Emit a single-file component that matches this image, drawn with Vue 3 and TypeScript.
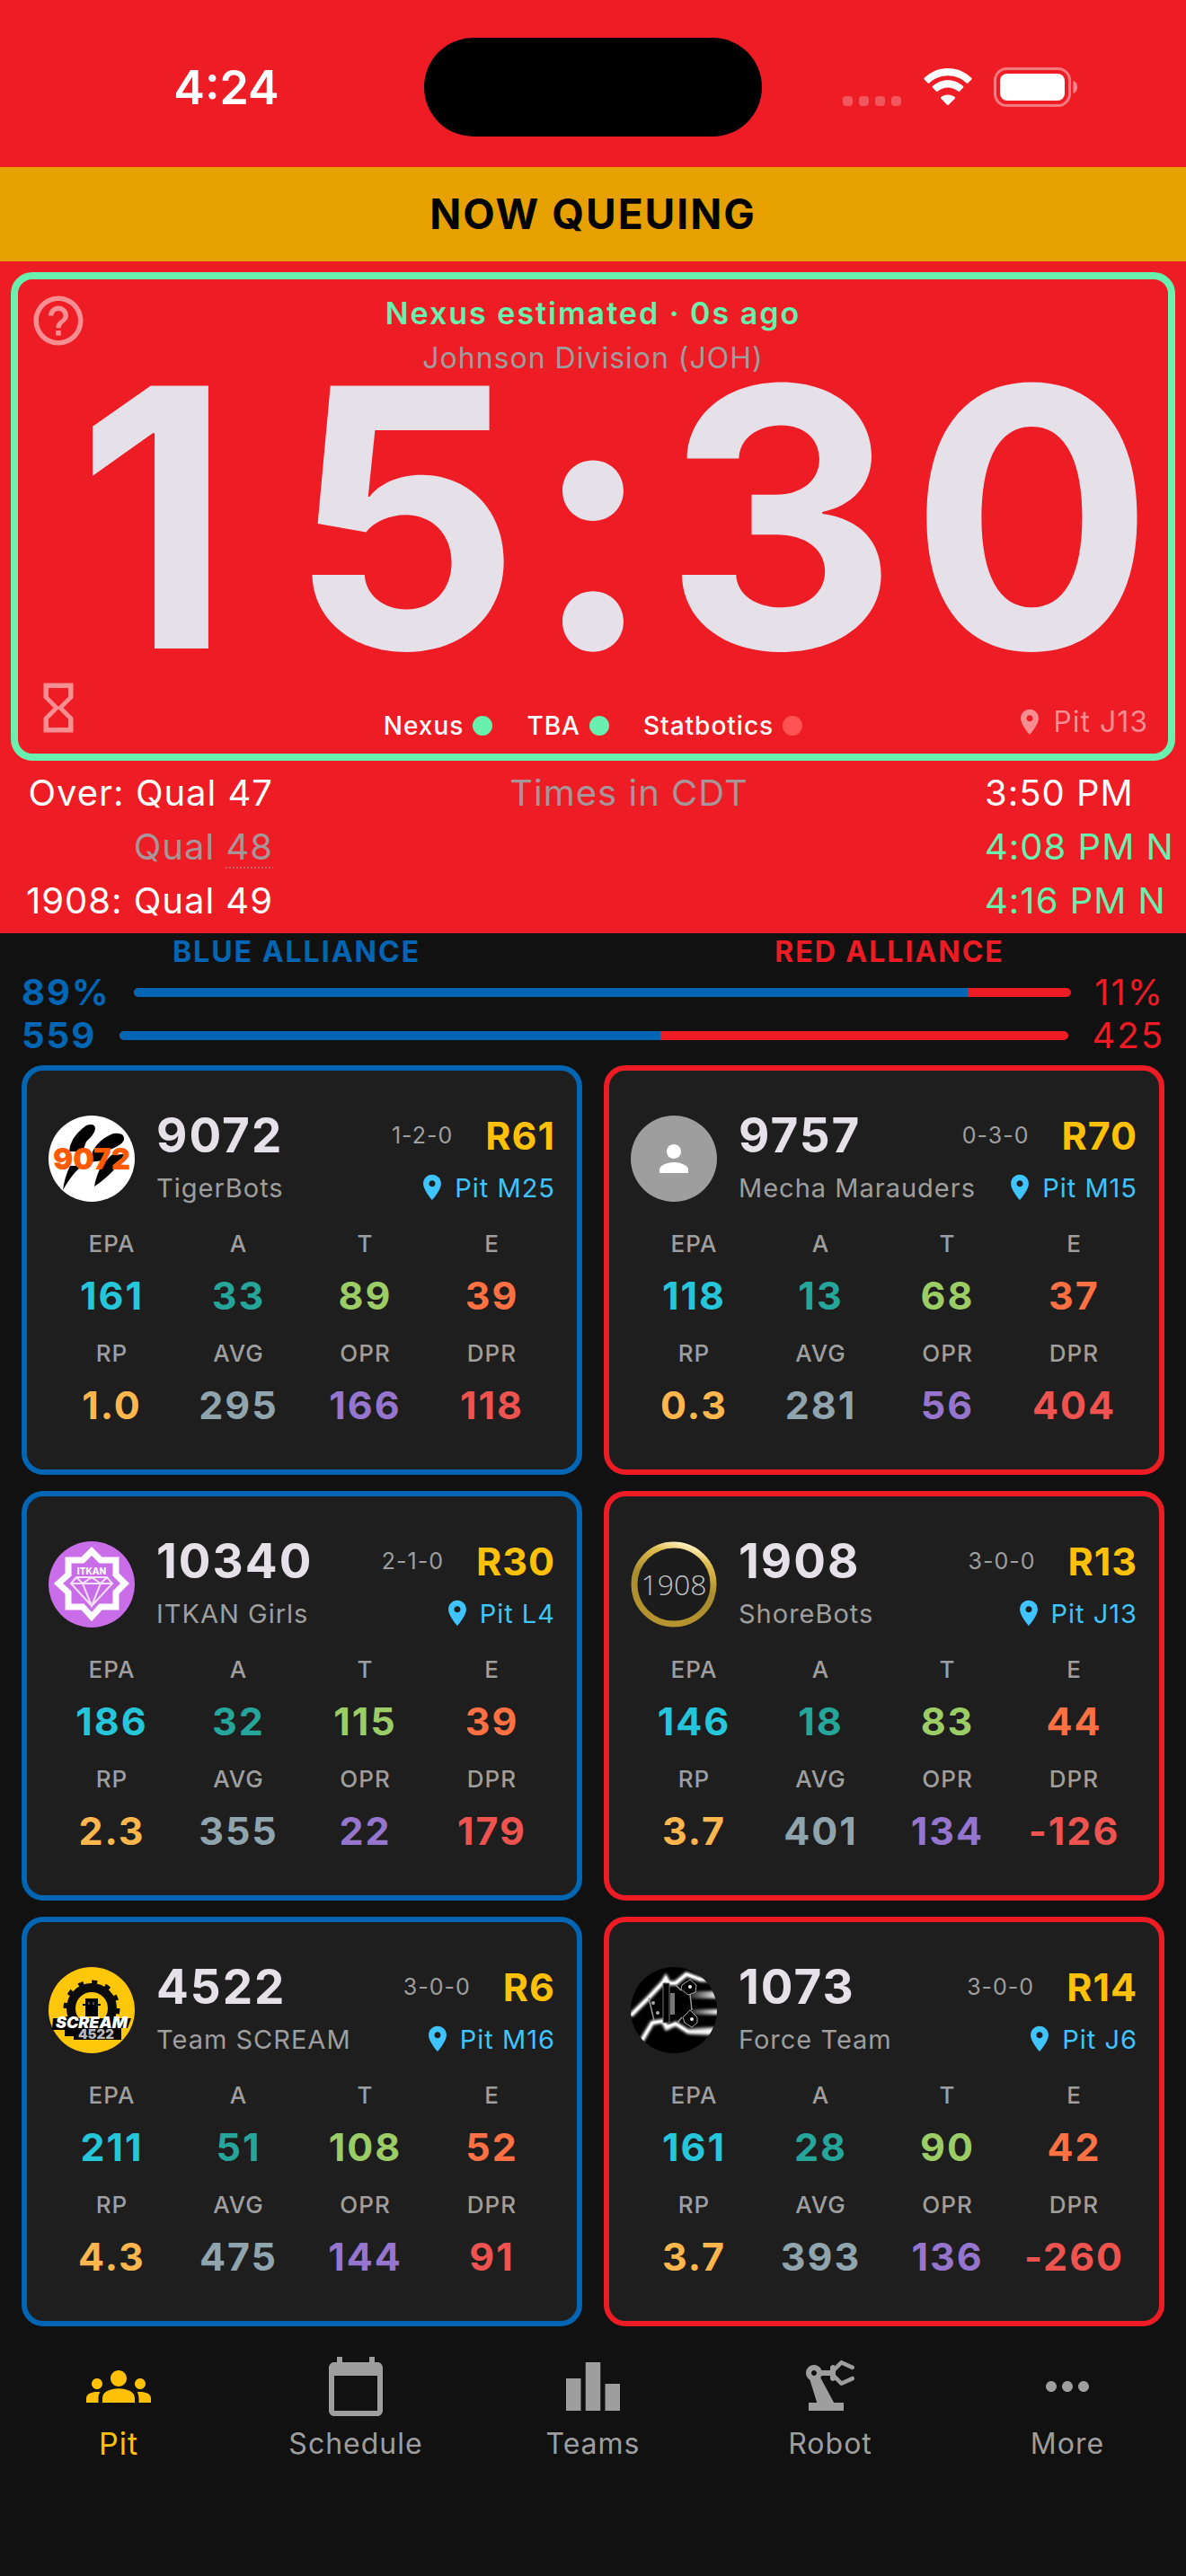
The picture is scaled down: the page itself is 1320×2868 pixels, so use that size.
<script setup lang="ts">
interface Team {
  number: string
  name: string
  record: string
  rank: string
  pit: string
  logo: 'tiger' | 'person' | 'itkan' | 'shore' | 'scream' | 'force'
  alliance: 'blue' | 'red'
  values: string[]
}

const metrics = [
  { label: 'EPA', tone: 'cyan' },
  { label: 'A', tone: 'teal' },
  { label: 'T', tone: 'green' },
  { label: 'E', tone: 'orange' },
  { label: 'RP', tone: 'amber' },
  { label: 'AVG', tone: 'slate' },
  { label: 'OPR', tone: 'purple' },
  { label: 'DPR', tone: 'rose' },
]

const teams: Team[] = [
  { number: '9072', name: 'TigerBots', record: '1-2-0', rank: 'R61', pit: 'Pit M25', logo: 'tiger', alliance: 'blue', values: ['161', '33', '89', '39', '1.0', '295', '166', '118'] },
  { number: '9757', name: 'Mecha Marauders', record: '0-3-0', rank: 'R70', pit: 'Pit M15', logo: 'person', alliance: 'red', values: ['118', '13', '68', '37', '0.3', '281', '56', '404'] },
  { number: '10340', name: 'ITKAN Girls', record: '2-1-0', rank: 'R30', pit: 'Pit L4', logo: 'itkan', alliance: 'blue', values: ['186', '32', '115', '39', '2.3', '355', '22', '179'] },
  { number: '1908', name: 'ShoreBots', record: '3-0-0', rank: 'R13', pit: 'Pit J13', logo: 'shore', alliance: 'red', values: ['146', '18', '83', '44', '3.7', '401', '134', '-126'] },
  { number: '4522', name: 'Team SCREAM', record: '3-0-0', rank: 'R6', pit: 'Pit M16', logo: 'scream', alliance: 'blue', values: ['211', '51', '108', '52', '4.3', '475', '144', '91'] },
  { number: '1073', name: 'Force Team', record: '3-0-0', rank: 'R14', pit: 'Pit J6', logo: 'force', alliance: 'red', values: ['161', '28', '90', '42', '3.7', '393', '136', '-260'] },
]

const sources = [
  { name: 'Nexus', up: true },
  { name: 'TBA', up: true },
  { name: 'Statbotics', up: false },
]

const forecasts = [
  { blue: '89%', red: '11%', share: 89 },
  { blue: '559', red: '425', share: 57 },
]

const countdown = '15:30'

const pinPath =
  'M12 2C8.13 2 5 5.13 5 9c0 5.25 7 13 7 13s7-7.75 7-13c0-3.87-3.13-7-7-7zm0 9.5c-1.38 0-2.5-1.12-2.5-2.5s1.12-2.5 2.5-2.5 2.5 1.12 2.5 2.5-1.12 2.5-2.5 2.5z'

const tabs = [
  { label: 'Pit', active: true, path: 'M12 12.75c1.63 0 3.07.39 4.24.9 1.08.48 1.76 1.56 1.76 2.73V18H6v-1.61c0-1.18.68-2.26 1.76-2.73 1.17-.52 2.61-.91 4.24-.91zM4 13c1.1 0 2-.9 2-2s-.9-2-2-2-2 .9-2 2 .9 2 2 2zm1.13 1.1c-.37-.06-.74-.1-1.13-.1-.99 0-1.93.21-2.78.58C.48 14.9 0 15.62 0 16.43V18h4.5v-1.61c0-.83.23-1.61.63-2.29zM20 13c1.1 0 2-.9 2-2s-.9-2-2-2-2 .9-2 2 .9 2 2 2zm4 3.43c0-.81-.48-1.53-1.22-1.85-.85-.37-1.79-.58-2.78-.58-.39 0-.76.04-1.13.1.4.68.63 1.46.63 2.29V18H24v-1.57zM12 6c1.66 0 3 1.34 3 3s-1.34 3-3 3-3-1.34-3-3 1.34-3 3-3z' },
  { label: 'Schedule', active: false, path: 'M20 3h-1V1h-2v2H7V1H5v2H4c-1.1 0-2 .9-2 2v16c0 1.1.9 2 2 2h16c1.1 0 2-.9 2-2V5c0-1.1-.9-2-2-2zm0 18H4V8h16v13z' },
  { label: 'Teams', active: false, path: 'M7.5 21H2V9h5.5v12zm7.25-18h-5.5v18h5.5V3zM22 11h-5.5v10H22V11z' },
  { label: 'Robot', active: false, path: 'M19.93 8.35l-3.6 1.68L14 7.7V6.3l2.33-2.33 3.6 1.68c.38.18.82.01 1-.36.18-.38.01-.82-.36-1l-3.92-1.83c-.38-.18-.83-.1-1.13.2L13.78 4.4c-.18-.24-.46-.4-.78-.4-.55 0-1 .45-1 1v1H8.82C8.4 4.84 7.3 4 6 4 4.34 4 3 5.34 3 7c0 1.1.6 2.05 1.48 2.58L7.08 18H4v3h13v-3h-3.62L8.41 8.77c.17-.24.31-.49.41-.77H12v1c0 .55.45 1 1 1 .32 0 .6-.16.78-.4l1.74 1.74c.3.3.75.38 1.13.2l3.92-1.83c.38-.18.54-.62.36-1-.18-.37-.62-.54-1-.36zM6 8c-.55 0-1-.45-1-1s.45-1 1-1 1 .45 1 1-.45 1-1 1z' },
  { label: 'More', active: false, path: 'M6 10c-1.1 0-2 .9-2 2s.9 2 2 2 2-.9 2-2-.9-2-2-2zm12 0c-1.1 0-2 .9-2 2s.9 2 2 2 2-.9 2-2-.9-2-2-2zm-6 0c-1.1 0-2 .9-2 2s.9 2 2 2 2-.9 2-2-.9-2-2-2z' },
]
</script>

<template>
  <div class="app">
    <div class="top">
      <header class="status-bar">
        <time class="device-time">4:24</time>
        <div class="island"></div>
        <div class="device-icons">
          <svg width="66" height="44" viewBox="0 0 66 44" aria-hidden="true">
            <g fill="#fff" opacity=".26">
              <rect x="0" y="32" width="11" height="11" rx="4" />
              <rect x="18" y="32" width="11" height="11" rx="4" />
              <rect x="36" y="32" width="11" height="11" rx="4" />
              <rect x="54" y="32" width="11" height="11" rx="4" />
            </g>
          </svg>
          <svg width="58" height="44" viewBox="0 0 58 44" aria-hidden="true">
            <g fill="#fff">
              <path d="M29 9.200c8 0 15.300 3.100 20.800 8.200.4.400 1.100.400 1.500 0l4-4c.5-.5.500-1.100 0-1.600C48.300 5 39 1 29 1S9.700 5 2.700 11.800c-.5.5-.5 1.100 0 1.600l4 4c.4.400 1.100.400 1.500 0C13.700 12.300 21 9.200 29 9.200z" />
              <path d="M29 22.400c4.400 0 8.400 1.600 11.500 4.300.5.400 1.100.4 1.500 0l4-4.100c.500-.5.500-1.100 0-1.600-4.500-4.200-10.500-6.700-17-6.700s-12.500 2.500-17 6.700c-.5.5-.5 1.100 0 1.600l4 4.100c.4.400 1 .4 1.500 0 3.100-2.700 7.100-4.300 11.500-4.300z" />
              <path d="M36.700 34.700c.5-.5.500-1.200 0-1.600-2.100-1.700-4.800-2.700-7.700-2.700s-5.600 1-7.700 2.700c-.5.400-.5 1.100 0 1.600l6.900 7c.5.500 1.100.5 1.600 0z" />
            </g>
          </svg>
          <svg width="94" height="44" viewBox="0 0 94 44" aria-hidden="true">
            <rect x="1.500" y="1.500" width="83" height="41" rx="13" fill="none" stroke="#fff" stroke-opacity=".42" stroke-width="3" />
            <rect x="7" y="7" width="72" height="30" rx="8" fill="#fff" />
            <path d="M88.500 15c3 1 4.500 3.500 4.500 7s-1.500 6-4.500 7z" fill="#fff" opacity=".48" />
          </svg>
        </div>
      </header>

      <div class="banner">NOW QUEUING</div>

      <section class="clock-card">
        <div class="clock-head">
          <button class="icon-button" type="button" aria-label="Help">
            <svg viewBox="0 0 24 24" aria-hidden="true"><path d="M11 18h2v-2h-2v2zm1-16C6.480 2 2 6.480 2 12s4.480 10 10 10 10-4.480 10-10S17.520 2 12 2zm0 18c-4.410 0-8-3.590-8-8s3.590-8 8-8 8 3.590 8 8-3.590 8-8 8zm0-14c-2.210 0-4 1.790-4 4h2c0-1.100.9-2 2-2s2 .9 2 2c0 2-3 1.750-3 5h2c0-2.250 3-2.500 3-5 0-2.210-1.790-4-4-4z" /></svg>
          </button>
          <div class="titles">
            <div class="source">Nexus estimated · 0s ago</div>
            <div class="event">Johnson Division (JOH)</div>
          </div>
        </div>
        <div class="countdown">
          <span v-for="(c, i) in countdown" :key="i">{{ c }}</span>
        </div>
        <div class="clock-foot">
          <button class="icon-button" type="button" aria-label="Countdown mode">
            <svg viewBox="0 0 24 24" aria-hidden="true"><path d="M6 2v6h.01L6 8.010 10 12l-4 4 .01.01H6V22h12v-5.990h-.01L18 16l-4-4 4-3.990-.01-.01H18V2H6zm10 14.500V20H8v-3.500l4-4 4 4zm-4-5l-4-4V4h8v3.500l-4 4z" /></svg>
          </button>
          <div class="sources">
            <span v-for="s in sources" :key="s.name" class="feed">
              {{ s.name }}<i class="dot" :class="{ down: !s.up }"></i>
            </span>
          </div>
          <div class="own-pit">
            <svg class="own-pin" viewBox="0 0 24 24" aria-hidden="true"><path :d="pinPath" /></svg>
            <span>Pit J13</span>
          </div>
        </div>
      </section>

      <section class="matches">
        <div class="match-names">
          <div>Over: Qual 47</div>
          <div class="dim">Qual <span class="dotted">48</span></div>
          <div>1908: Qual 49</div>
        </div>
        <div class="zone">Times in CDT</div>
        <div class="match-times">
          <div>3:50 PM</div>
          <div class="live">4:08 PM N</div>
          <div class="live">4:16 PM N</div>
        </div>
      </section>
    </div>

    <section class="forecast">
      <div class="alliances">
        <span class="blue">BLUE ALLIANCE</span>
        <span class="red">RED ALLIANCE</span>
      </div>
      <div v-for="f in forecasts" :key="f.blue" class="forecast-row">
        <span class="blue strong">{{ f.blue }}</span>
        <div class="bar"><div class="bar-fill" :style="{ width: f.share + '%' }"></div></div>
        <span class="red">{{ f.red }}</span>
      </div>
    </section>

    <main class="teams">
      <article v-for="t in teams" :key="t.number" class="team" :class="t.alliance">
        <div class="team-head">
          <svg class="logo" viewBox="0 0 96 96" aria-hidden="true">
            <g v-if="t.logo === 'tiger'">
              <circle cx="48" cy="48" r="48" fill="#fff" />
              <path d="M42 11Q52 8 52 15 51 21 42 29L38 40H23Q24 24 42 11z" />
              <path d="M72 20Q85 18 84 27 82 33 68 38L60 50 46 52Q48 30 72 20z" />
              <path d="M38 56Q28 62 16 83 18 68 24 56z" />
              <path d="M84 43Q76 62 51 79 53 66 60 54L70 44z" />
              <text x="48" y="60" text-anchor="middle" font-family="Inter, sans-serif" font-weight="900" font-size="33" fill="#ff5a00">9072</text>
            </g>
            <g v-else-if="t.logo === 'person'">
              <circle cx="48" cy="48" r="48" fill="#9e9e9e" />
              <path transform="translate(24 24) scale(2)" fill="#fff" d="M12 12c2.210 0 4-1.790 4-4s-1.790-4-4-4-4 1.790-4 4 1.790 4 4 4zm0 2c-2.670 0-8 1.340-8 4v2h16v-2c0-2.660-5.330-4-8-4z" />
            </g>
            <g v-else-if="t.logo === 'itkan'">
              <circle cx="48" cy="48" r="48" fill="#c96ee8" />
              <path d="M48 11 58 21H75V37L85 47 75 57V73H58L48 84 38 73H22V57L11 47 22 37V21H38z" fill="none" stroke="#fff" stroke-width="7" />
              <path d="M31 40H65L71 47 48 72 25 47zM25 47H71M38 47 48 72 58 47M31 40 38 47 48 40 58 47 65 40" fill="none" stroke="#fff" stroke-width="2" stroke-opacity=".8" />
              <text x="48" y="37" text-anchor="middle" font-family="Inter, sans-serif" font-weight="800" font-size="10" fill="#fff">ITKAN</text>
            </g>
            <g v-else-if="t.logo === 'shore'">
              <defs>
                <linearGradient id="gold" x1=".7" y1="0" x2=".4" y2="1">
                  <stop offset="0" stop-color="#fff3c4" />
                  <stop offset=".16" stop-color="#e0bd4e" />
                  <stop offset=".5" stop-color="#a88c2e" />
                  <stop offset="1" stop-color="#b5942f" />
                </linearGradient>
              </defs>
              <circle cx="48" cy="48" r="44" fill="#1c1c1c" stroke="url(#gold)" stroke-width="7" />
              <text x="48" y="60" text-anchor="middle" font-family="'Liberation Sans Narrow', 'Open Sans', sans-serif" font-size="32" font-weight="300" fill="#c4c4c4">1908</text>
            </g>
            <g v-else-if="t.logo === 'scream'">
              <circle cx="48" cy="48" r="48" fill="#fec70a" />
              <circle cx="48" cy="46" r="23" fill="none" stroke="#0c0c0c" stroke-width="10" />
              <circle cx="48" cy="46" r="29" fill="none" stroke="#0c0c0c" stroke-width="5" stroke-dasharray="6 9.180" />
              <path d="M41 35h14v20H41zM38 41h20v2H38z" />
              <path d="M45 39v3M50 39v3" stroke="#999" stroke-width="1" />
              <path d="M5 57H92L88 68H81V81H28V77H18V70H4z" />
              <text x="48" y="68" text-anchor="middle" font-family="Inter, sans-serif" font-style="italic" font-weight="900" font-size="18" fill="#fff">SCREAM</text>
              <text x="53" y="80" text-anchor="middle" font-family="Inter, sans-serif" font-weight="900" font-size="15" fill="#bbb">4522</text>
            </g>
            <g v-else>
              <defs>
                <clipPath id="round"><circle cx="48" cy="48" r="48" /></clipPath>
                <filter id="glow"><feGaussianBlur stdDeviation="1.500" /></filter>
                <linearGradient id="beam" x1="0" y1="0" x2="1" y2="0">
                  <stop offset="0" stop-color="#fff" stop-opacity=".1" />
                  <stop offset="1" stop-color="#fff" />
                </linearGradient>
              </defs>
              <circle cx="48" cy="48" r="48" />
              <g clip-path="url(#round)">
                <g filter="url(#glow)">
                  <path d="M66 27H98V35H66zM66 47H98V53H66zM64 67H98V76H66z" fill="url(#beam)" />
                  <path d="M0 54 20 34 36 17 39 12 42 18H50L62 8 78 14H98M11 84 24 62 36 60 40 68 50 63 64 72H98" fill="none" stroke="#fff" stroke-width="5" />
                </g>
                <path d="M0 54 20 34 36 17 39 12 42 18H50L62 8 78 14M11 84 24 62 36 60 40 66 50 63 64 72" fill="none" stroke="#fff" stroke-width="2" />
                <path d="M20 34 26 60M50 20 56 26M52 62 57 56M66 30 68 48" fill="none" stroke="#999" stroke-width="1.500" />
                <path d="M36 18h7v44h-7z" fill="#000" stroke="#777" stroke-width="1" />
                <path d="M44 29h5v24h-5z" fill="#777" />
                <path d="M57 20 66 14 73 20 72 28 64 31 56 25zM58 56 66 48 74 56 74 62 68 67 60 62z" fill="#000" stroke="#aaa" stroke-width="1" />
                <circle cx="66" cy="22" r="2" fill="#eee" />
                <circle cx="68" cy="58" r="2" fill="#eee" />
                <circle cx="25" cy="40" r="2" fill="#aaa" />
                <circle cx="30" cy="51" r="2" fill="#aaa" />
              </g>
            </g>
          </svg>
          <div class="identity">
            <div class="line-one">
              <h2 class="number">{{ t.number }}</h2>
              <span class="record">{{ t.record }}</span>
              <span class="rank">{{ t.rank }}</span>
            </div>
            <div class="line-two">
              <span class="name">{{ t.name }}</span>
              <span class="pit">
                <svg class="pin" viewBox="0 0 24 24" aria-hidden="true"><path :d="pinPath" /></svg>
                {{ t.pit }}
              </span>
            </div>
          </div>
        </div>
        <dl class="metrics">
          <div v-for="(m, i) in metrics" :key="m.label" class="metric">
            <dt>{{ m.label }}</dt>
            <dd :class="m.tone">{{ t.values[i] }}</dd>
          </div>
        </dl>
      </article>
    </main>

    <nav class="tabs">
      <a v-for="tab in tabs" :key="tab.label" href="#" class="tab" :class="{ active: tab.active }">
        <svg viewBox="0 0 24 24" aria-hidden="true"><path :d="tab.path" /></svg>
        <span>{{ tab.label }}</span>
      </a>
    </nav>
  </div>
</template>

<style>
body {
  background: #111111;
}
</style>

<style scoped>
.app {
  min-height: 100vh;
  background: #111111;
  color: #ffffff;
  font-family: Inter, "Liberation Sans", sans-serif;
  font-size: 32px;
  letter-spacing: 1px;
  white-space: nowrap;
}

.banner,
.source,
.alliances,
.forecast-row,
.number,
.metric dd {
  letter-spacing: 2px;
}

.device-time,
.countdown,
.logo {
  letter-spacing: normal;
}

.top {
  background: #ee1c25;
}

.status-bar {
  display: grid;
  grid-template-columns: 1fr 376px 1fr;
  align-items: center;
  padding: 42px 0 34px;
}

.device-time {
  padding-left: 32px;
  text-align: center;
  font-size: 52px;
  font-weight: 600;
}

.island {
  height: 110px;
  border-radius: 55px;
  background: #000000;
}

.device-icons {
  display: flex;
  justify-content: center;
  gap: 22px;
  padding-right: 30px;
}

.banner {
  background: #e6a000;
  color: #000000;
  text-align: center;
  font-size: 46px;
  font-weight: 700;
  line-height: 105px;
}

.clock-card {
  margin: 12px 12px 0;
  padding: 13px 12px 18px;
  border: 8px solid #69f0ae;
  border-radius: 24px;
}

.clock-head,
.clock-foot {
  display: grid;
  grid-template-columns: 1fr auto 1fr;
}

.icon-button {
  width: 66px;
  height: 66px;
  padding: 0;
  border: 0;
  background: none;
}

.icon-button svg {
  display: block;
  width: 66px;
  height: 66px;
  fill: #ffffff;
  opacity: 0.5;
}

.titles {
  text-align: center;
  line-height: 50px;
}

.source {
  color: #69f0ae;
  font-size: 34px;
  font-weight: 600;
}

.event {
  color: #9e9e9e;
}

.countdown {
  display: grid;
  grid-template-columns: 2fr 2fr 1fr 2fr 2fr;
  justify-items: center;
  color: #e6e0e9;
  font-size: 402px;
  font-weight: 700;
  line-height: 304px;
}

.clock-foot {
  align-items: end;
  margin-top: 27px;
}

.sources {
  display: flex;
  gap: 38px;
  font-size: 28px;
  font-weight: 500;
  line-height: 26px;
}

.feed {
  display: flex;
  align-items: center;
  gap: 10px;
}

.dot {
  width: 22px;
  height: 22px;
  border-radius: 50%;
  background: #69f0ae;
}

.dot.down {
  background: #ff5252;
}

.own-pit {
  display: flex;
  justify-content: flex-end;
  align-items: center;
  gap: 8px;
  padding-right: 10px;
  line-height: 34px;
  opacity: 0.5;
}

.own-pin {
  width: 36px;
  height: 34px;
  fill: #ffffff;
}

.matches {
  display: grid;
  grid-template-columns: minmax(292px, auto) 1fr minmax(212px, auto);
  padding: 6px 12px;
  font-size: 40px;
  line-height: 60px;
}

.match-names {
  text-align: right;
}

.dim,
.zone {
  color: #a8959a;
}

.dotted {
  text-decoration: underline dotted rgba(168, 149, 154, 0.6) 2px;
  text-underline-offset: 8px;
}

.zone {
  text-align: center;
}

.live {
  color: #69f0ae;
}

.forecast {
  font-size: 40px;
  line-height: 48px;
}

.alliances {
  display: grid;
  grid-template-columns: 1fr 1fr;
  text-align: center;
  font-size: 32px;
  font-weight: 700;
  line-height: 42px;
}

.forecast .blue {
  color: #0066b3;
}

.forecast .red {
  color: #ed1c24;
}

.strong {
  font-weight: 700;
}

.forecast-row {
  display: flex;
  align-items: center;
  gap: 26px;
  padding: 0 24px;
}

.bar {
  flex: 1;
  height: 10px;
  border-radius: 5px;
  overflow: hidden;
  background: #ed1c24;
}

.bar-fill {
  height: 100%;
  background: #0066b3;
}

.teams {
  display: grid;
  grid-template-columns: 1fr 1fr;
  gap: 18px 24px;
  padding: 9px 24px 0;
}

.team {
  padding: 40px 24px;
  border: 6px solid #0066b3;
  border-radius: 24px;
  background: #1e1e1e;
}

.team.red {
  border-color: #ed1c24;
}

.team-head {
  display: flex;
  align-items: center;
  gap: 24px;
}

.logo {
  flex: none;
  width: 96px;
  height: 96px;
}

.identity {
  flex: 1;
}

.line-one,
.line-two {
  display: flex;
  align-items: center;
}

.line-one {
  height: 64px;
}

.line-two {
  justify-content: space-between;
  height: 52px;
  font-size: 29px;
}

.number {
  flex: 1;
  margin: 0;
  color: #e6e0e9;
  font-size: 53px;
  font-weight: 700;
}

.record {
  margin-right: 36px;
  color: #9e9e9e;
  font-size: 25px;
}

.rank {
  color: #ffc107;
  font-size: 43px;
  font-weight: 700;
}

.name {
  color: #9e9e9e;
}

.pit {
  display: flex;
  align-items: center;
  gap: 8px;
  color: #40c4ff;
}

.pin {
  width: 34px;
  height: 34px;
  fill: #40c4ff;
}

.metrics {
  display: grid;
  grid-template-columns: repeat(4, 1fr);
  row-gap: 8px;
  margin: 12px 0 0;
  text-align: center;
}

.metric {
  min-width: 0;
}

.metric dt {
  color: #9e9e9e;
  font-size: 26px;
  font-weight: 500;
  line-height: 50px;
}

.metric dd {
  margin: 0;
  font-size: 43px;
  font-weight: 700;
  line-height: 64px;
}

.cyan { color: #26c6da; }
.teal { color: #26a69a; }
.green { color: #9ccc65; }
.orange { color: #ff7043; }
.amber { color: #ffb74d; }
.slate { color: #90a4ae; }
.purple { color: #9575cd; }
.rose { color: #ef5350; }

.tabs {
  display: grid;
  grid-template-columns: repeat(5, 1fr);
  padding-top: 31px;
}

.tab {
  display: flex;
  flex-direction: column;
  align-items: center;
  color: #9e9e9e;
  line-height: 56px;
  text-decoration: none;
}

.tab svg {
  width: 72px;
  height: 72px;
  fill: currentColor;
}

.tab.active {
  color: #ffc107;
  font-size: 34px;
}
</style>
